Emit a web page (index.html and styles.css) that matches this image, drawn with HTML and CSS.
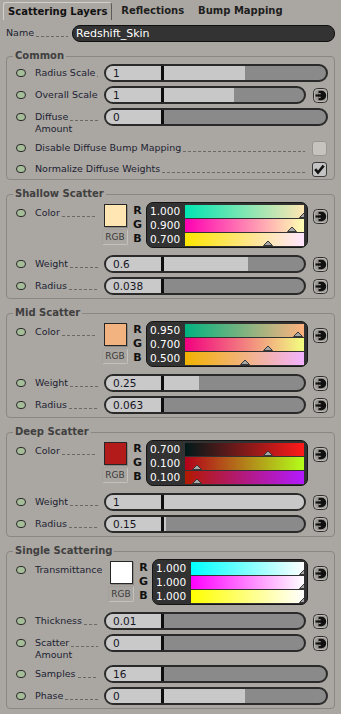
FILE: index.html
```html
<!DOCTYPE html>
<html lang="en">
<head>
    <meta charset="UTF-8">
    <meta name="viewport" content="width=device-width, initial-scale=1.0">
    <title>Redshift Skin - Scattering Layers</title>
    <link rel="stylesheet" href="styles.css">
</head>
<body>
    <div class="tabs">
        <div class="tab active">Scattering Layers</div>
        <div class="tab">Reflections</div>
        <div class="tab">Bump Mapping</div>
    </div>

    <div class="name-row">
        <div class="name-label">Name<i class="lead"></i></div>
        <div class="name-field">Redshift_Skin</div>
    </div>

    <!-- Common -->
    <fieldset class="group">
        <legend>Common</legend>
        <div class="row">
            <span class="led"></span>
            <div class="label"><span class="first">Radius Scale<i class="lead"></i></span></div>
            <div class="slider"><span class="val">1</span><span class="track"><span class="fill" style="width:50%"></span></span></div>
        </div>
        <div class="row">
            <span class="led"></span>
            <div class="label"><span class="first">Overall Scale<i class="lead"></i></span></div>
            <div class="slider"><span class="val">1</span><span class="track"><span class="fill" style="width:50%"></span></span></div>
            <svg class="plug" viewBox="0 0 15 15"><rect x="0.5" y="0.5" width="14" height="14" rx="4" fill="#9c9893" stroke="#2e2e2e"/><rect x="1.5" y="1.5" width="12" height="12" rx="3" fill="none" stroke="#bdb9b4"/><path d="M2.5 7.5h4" stroke="#111" stroke-width="2.2"/><path d="M5.5 2.8h3a4.7 4.7 0 0 1 0 9.4h-3z" fill="#111"/><path d="M5.5 5.6h2.2M5.5 9.4h2.2" stroke="#9c9893" stroke-width="1.1"/></svg>
        </div>
        <div class="row">
            <span class="led"></span>
            <div class="label"><span class="first">Diffuse<i class="lead"></i></span><span>Amount</span></div>
            <div class="slider"><span class="val">0</span><span class="track"><span class="fill" style="width:0%"></span></span></div>
        </div>
        <div class="row">
            <span class="led"></span>
            <div class="label wide"><span class="first">Disable Diffuse Bump Mapping<i class="lead"></i></span></div>
            <span class="check"></span>
        </div>
        <div class="row">
            <span class="led"></span>
            <div class="label wide"><span class="first">Normalize Diffuse Weights<i class="lead"></i></span></div>
            <span class="check on"><svg viewBox="0 0 15 15"><path d="M2.5 7l3.3 4 6.5-8" fill="none" stroke="#111" stroke-width="3"/></svg></span>
        </div>
    </fieldset>

    <!-- Shallow Scatter -->
    <fieldset class="group">
        <legend>Shallow Scatter</legend>
        <div class="row color-row" style="--r:1;--g:0.9;--b:0.7">
            <span class="led"></span>
            <div class="label"><span class="first">Color<i class="lead"></i></span></div>
            <div class="swatch-col"><span class="swatch"></span><span class="rgb-btn">RGB</span></div>
            <div class="letters"><b>R</b><b>G</b><b>B</b></div>
            <div class="picker">
                <div class="chan"><span class="num">1.000</span><span class="bar bar-r"><svg class="mark" viewBox="0 0 10 6"><path d="M0.5 5.5L5 1l4.5 4.5z" fill="#a6a6a6" stroke="#383838"/></svg></span></div>
                <div class="chan"><span class="num">0.900</span><span class="bar bar-g"><svg class="mark" viewBox="0 0 10 6"><path d="M0.5 5.5L5 1l4.5 4.5z" fill="#a6a6a6" stroke="#383838"/></svg></span></div>
                <div class="chan"><span class="num">0.700</span><span class="bar bar-b"><svg class="mark" viewBox="0 0 10 6"><path d="M0.5 5.5L5 1l4.5 4.5z" fill="#a6a6a6" stroke="#383838"/></svg></span></div>
            </div>
            <svg class="plug" viewBox="0 0 15 15"><rect x="0.5" y="0.5" width="14" height="14" rx="4" fill="#9c9893" stroke="#2e2e2e"/><rect x="1.5" y="1.5" width="12" height="12" rx="3" fill="none" stroke="#bdb9b4"/><path d="M2.5 7.5h4" stroke="#111" stroke-width="2.2"/><path d="M5.5 2.8h3a4.7 4.7 0 0 1 0 9.4h-3z" fill="#111"/><path d="M5.5 5.6h2.2M5.5 9.4h2.2" stroke="#9c9893" stroke-width="1.1"/></svg>
        </div>
        <div class="row after-color">
            <span class="led"></span>
            <div class="label"><span class="first">Weight<i class="lead"></i></span></div>
            <div class="slider"><span class="val">0.6</span><span class="track"><span class="fill" style="width:60%"></span></span></div>
            <svg class="plug" viewBox="0 0 15 15"><rect x="0.5" y="0.5" width="14" height="14" rx="4" fill="#9c9893" stroke="#2e2e2e"/><rect x="1.5" y="1.5" width="12" height="12" rx="3" fill="none" stroke="#bdb9b4"/><path d="M2.5 7.5h4" stroke="#111" stroke-width="2.2"/><path d="M5.5 2.8h3a4.7 4.7 0 0 1 0 9.4h-3z" fill="#111"/><path d="M5.5 5.6h2.2M5.5 9.4h2.2" stroke="#9c9893" stroke-width="1.1"/></svg>
        </div>
        <div class="row">
            <span class="led"></span>
            <div class="label"><span class="first">Radius<i class="lead"></i></span></div>
            <div class="slider"><span class="val">0.038</span><span class="track"><span class="fill" style="width:0%"></span></span></div>
            <svg class="plug" viewBox="0 0 15 15"><rect x="0.5" y="0.5" width="14" height="14" rx="4" fill="#9c9893" stroke="#2e2e2e"/><rect x="1.5" y="1.5" width="12" height="12" rx="3" fill="none" stroke="#bdb9b4"/><path d="M2.5 7.5h4" stroke="#111" stroke-width="2.2"/><path d="M5.5 2.8h3a4.7 4.7 0 0 1 0 9.4h-3z" fill="#111"/><path d="M5.5 5.6h2.2M5.5 9.4h2.2" stroke="#9c9893" stroke-width="1.1"/></svg>
        </div>
    </fieldset>

    <!-- Mid Scatter -->
    <fieldset class="group">
        <legend>Mid Scatter</legend>
        <div class="row color-row" style="--r:0.95;--g:0.7;--b:0.5">
            <span class="led"></span>
            <div class="label"><span class="first">Color<i class="lead"></i></span></div>
            <div class="swatch-col"><span class="swatch"></span><span class="rgb-btn">RGB</span></div>
            <div class="letters"><b>R</b><b>G</b><b>B</b></div>
            <div class="picker">
                <div class="chan"><span class="num">0.950</span><span class="bar bar-r"><svg class="mark" viewBox="0 0 10 6"><path d="M0.5 5.5L5 1l4.5 4.5z" fill="#a6a6a6" stroke="#383838"/></svg></span></div>
                <div class="chan"><span class="num">0.700</span><span class="bar bar-g"><svg class="mark" viewBox="0 0 10 6"><path d="M0.5 5.5L5 1l4.5 4.5z" fill="#a6a6a6" stroke="#383838"/></svg></span></div>
                <div class="chan"><span class="num">0.500</span><span class="bar bar-b"><svg class="mark" viewBox="0 0 10 6"><path d="M0.5 5.5L5 1l4.5 4.5z" fill="#a6a6a6" stroke="#383838"/></svg></span></div>
            </div>
            <svg class="plug" viewBox="0 0 15 15"><rect x="0.5" y="0.5" width="14" height="14" rx="4" fill="#9c9893" stroke="#2e2e2e"/><rect x="1.5" y="1.5" width="12" height="12" rx="3" fill="none" stroke="#bdb9b4"/><path d="M2.5 7.5h4" stroke="#111" stroke-width="2.2"/><path d="M5.5 2.8h3a4.7 4.7 0 0 1 0 9.4h-3z" fill="#111"/><path d="M5.5 5.6h2.2M5.5 9.4h2.2" stroke="#9c9893" stroke-width="1.1"/></svg>
        </div>
        <div class="row after-color">
            <span class="led"></span>
            <div class="label"><span class="first">Weight<i class="lead"></i></span></div>
            <div class="slider"><span class="val">0.25</span><span class="track"><span class="fill" style="width:25%"></span></span></div>
            <svg class="plug" viewBox="0 0 15 15"><rect x="0.5" y="0.5" width="14" height="14" rx="4" fill="#9c9893" stroke="#2e2e2e"/><rect x="1.5" y="1.5" width="12" height="12" rx="3" fill="none" stroke="#bdb9b4"/><path d="M2.5 7.5h4" stroke="#111" stroke-width="2.2"/><path d="M5.5 2.8h3a4.7 4.7 0 0 1 0 9.4h-3z" fill="#111"/><path d="M5.5 5.6h2.2M5.5 9.4h2.2" stroke="#9c9893" stroke-width="1.1"/></svg>
        </div>
        <div class="row">
            <span class="led"></span>
            <div class="label"><span class="first">Radius<i class="lead"></i></span></div>
            <div class="slider"><span class="val">0.063</span><span class="track"><span class="fill" style="width:0%"></span></span></div>
            <svg class="plug" viewBox="0 0 15 15"><rect x="0.5" y="0.5" width="14" height="14" rx="4" fill="#9c9893" stroke="#2e2e2e"/><rect x="1.5" y="1.5" width="12" height="12" rx="3" fill="none" stroke="#bdb9b4"/><path d="M2.5 7.5h4" stroke="#111" stroke-width="2.2"/><path d="M5.5 2.8h3a4.7 4.7 0 0 1 0 9.4h-3z" fill="#111"/><path d="M5.5 5.6h2.2M5.5 9.4h2.2" stroke="#9c9893" stroke-width="1.1"/></svg>
        </div>
    </fieldset>

    <!-- Deep Scatter -->
    <fieldset class="group">
        <legend>Deep Scatter</legend>
        <div class="row color-row" style="--r:0.7;--g:0.1;--b:0.1">
            <span class="led"></span>
            <div class="label"><span class="first">Color<i class="lead"></i></span></div>
            <div class="swatch-col"><span class="swatch"></span><span class="rgb-btn">RGB</span></div>
            <div class="letters"><b>R</b><b>G</b><b>B</b></div>
            <div class="picker">
                <div class="chan"><span class="num">0.700</span><span class="bar bar-r"><svg class="mark" viewBox="0 0 10 6"><path d="M0.5 5.5L5 1l4.5 4.5z" fill="#a6a6a6" stroke="#383838"/></svg></span></div>
                <div class="chan"><span class="num">0.100</span><span class="bar bar-g"><svg class="mark" viewBox="0 0 10 6"><path d="M0.5 5.5L5 1l4.5 4.5z" fill="#a6a6a6" stroke="#383838"/></svg></span></div>
                <div class="chan"><span class="num">0.100</span><span class="bar bar-b"><svg class="mark" viewBox="0 0 10 6"><path d="M0.5 5.5L5 1l4.5 4.5z" fill="#a6a6a6" stroke="#383838"/></svg></span></div>
            </div>
            <svg class="plug" viewBox="0 0 15 15"><rect x="0.5" y="0.5" width="14" height="14" rx="4" fill="#9c9893" stroke="#2e2e2e"/><rect x="1.5" y="1.5" width="12" height="12" rx="3" fill="none" stroke="#bdb9b4"/><path d="M2.5 7.5h4" stroke="#111" stroke-width="2.2"/><path d="M5.5 2.8h3a4.7 4.7 0 0 1 0 9.4h-3z" fill="#111"/><path d="M5.5 5.6h2.2M5.5 9.4h2.2" stroke="#9c9893" stroke-width="1.1"/></svg>
        </div>
        <div class="row after-color">
            <span class="led"></span>
            <div class="label"><span class="first">Weight<i class="lead"></i></span></div>
            <div class="slider"><span class="val">1</span><span class="track"><span class="fill" style="width:100%"></span></span></div>
            <svg class="plug" viewBox="0 0 15 15"><rect x="0.5" y="0.5" width="14" height="14" rx="4" fill="#9c9893" stroke="#2e2e2e"/><rect x="1.5" y="1.5" width="12" height="12" rx="3" fill="none" stroke="#bdb9b4"/><path d="M2.5 7.5h4" stroke="#111" stroke-width="2.2"/><path d="M5.5 2.8h3a4.7 4.7 0 0 1 0 9.4h-3z" fill="#111"/><path d="M5.5 5.6h2.2M5.5 9.4h2.2" stroke="#9c9893" stroke-width="1.1"/></svg>
        </div>
        <div class="row">
            <span class="led"></span>
            <div class="label"><span class="first">Radius<i class="lead"></i></span></div>
            <div class="slider"><span class="val">0.15</span><span class="track"><span class="fill" style="width:1.5%"></span></span></div>
            <svg class="plug" viewBox="0 0 15 15"><rect x="0.5" y="0.5" width="14" height="14" rx="4" fill="#9c9893" stroke="#2e2e2e"/><rect x="1.5" y="1.5" width="12" height="12" rx="3" fill="none" stroke="#bdb9b4"/><path d="M2.5 7.5h4" stroke="#111" stroke-width="2.2"/><path d="M5.5 2.8h3a4.7 4.7 0 0 1 0 9.4h-3z" fill="#111"/><path d="M5.5 5.6h2.2M5.5 9.4h2.2" stroke="#9c9893" stroke-width="1.1"/></svg>
        </div>
    </fieldset>

    <!-- Single Scattering -->
    <fieldset class="group">
        <legend>Single Scattering</legend>
        <div class="row color-row" style="--r:1;--g:1;--b:1">
            <span class="led"></span>
            <div class="label trans"><span class="first">Transmittance<i class="lead"></i></span></div>
            <div class="swatch-col"><span class="swatch"></span><span class="rgb-btn">RGB</span></div>
            <div class="letters"><b>R</b><b>G</b><b>B</b></div>
            <div class="picker">
                <div class="chan"><span class="num">1.000</span><span class="bar bar-r"><svg class="mark" viewBox="0 0 10 6"><path d="M0.5 5.5L5 1l4.5 4.5z" fill="#a6a6a6" stroke="#383838"/></svg></span></div>
                <div class="chan"><span class="num">1.000</span><span class="bar bar-g"><svg class="mark" viewBox="0 0 10 6"><path d="M0.5 5.5L5 1l4.5 4.5z" fill="#a6a6a6" stroke="#383838"/></svg></span></div>
                <div class="chan"><span class="num">1.000</span><span class="bar bar-b"><svg class="mark" viewBox="0 0 10 6"><path d="M0.5 5.5L5 1l4.5 4.5z" fill="#a6a6a6" stroke="#383838"/></svg></span></div>
            </div>
            <svg class="plug" viewBox="0 0 15 15"><rect x="0.5" y="0.5" width="14" height="14" rx="4" fill="#9c9893" stroke="#2e2e2e"/><rect x="1.5" y="1.5" width="12" height="12" rx="3" fill="none" stroke="#bdb9b4"/><path d="M2.5 7.5h4" stroke="#111" stroke-width="2.2"/><path d="M5.5 2.8h3a4.7 4.7 0 0 1 0 9.4h-3z" fill="#111"/><path d="M5.5 5.6h2.2M5.5 9.4h2.2" stroke="#9c9893" stroke-width="1.1"/></svg>
        </div>
        <div class="row after-color">
            <span class="led"></span>
            <div class="label"><span class="first">Thickness<i class="lead"></i></span></div>
            <div class="slider"><span class="val">0.01</span><span class="track"><span class="fill" style="width:0%"></span></span></div>
            <svg class="plug" viewBox="0 0 15 15"><rect x="0.5" y="0.5" width="14" height="14" rx="4" fill="#9c9893" stroke="#2e2e2e"/><rect x="1.5" y="1.5" width="12" height="12" rx="3" fill="none" stroke="#bdb9b4"/><path d="M2.5 7.5h4" stroke="#111" stroke-width="2.2"/><path d="M5.5 2.8h3a4.7 4.7 0 0 1 0 9.4h-3z" fill="#111"/><path d="M5.5 5.6h2.2M5.5 9.4h2.2" stroke="#9c9893" stroke-width="1.1"/></svg>
        </div>
        <div class="row">
            <span class="led"></span>
            <div class="label"><span class="first">Scatter<i class="lead"></i></span><span>Amount</span></div>
            <div class="slider"><span class="val">0</span><span class="track"><span class="fill" style="width:0%"></span></span></div>
            <svg class="plug" viewBox="0 0 15 15"><rect x="0.5" y="0.5" width="14" height="14" rx="4" fill="#9c9893" stroke="#2e2e2e"/><rect x="1.5" y="1.5" width="12" height="12" rx="3" fill="none" stroke="#bdb9b4"/><path d="M2.5 7.5h4" stroke="#111" stroke-width="2.2"/><path d="M5.5 2.8h3a4.7 4.7 0 0 1 0 9.4h-3z" fill="#111"/><path d="M5.5 5.6h2.2M5.5 9.4h2.2" stroke="#9c9893" stroke-width="1.1"/></svg>
        </div>
        <div class="row">
            <span class="led"></span>
            <div class="label"><span class="first">Samples<i class="lead"></i></span></div>
            <div class="slider"><span class="val">16</span><span class="track"><span class="fill" style="width:0%"></span></span></div>
        </div>
        <div class="row">
            <span class="led"></span>
            <div class="label"><span class="first">Phase<i class="lead"></i></span></div>
            <div class="slider"><span class="val">0</span><span class="track"><span class="fill" style="width:50%"></span></span></div>
        </div>
    </fieldset>
</body>
</html>
```

FILE: styles.css
```css
* {
    box-sizing: border-box;
}
body {
    margin: 0;
    background-color: #aaa6a1;
    font-family: 'DejaVu Sans', Verdana, sans-serif;
    font-size: 9.5px;
    color: #1c1f33;
    overflow: hidden;
}

/* tabs */
.tabs {
    display: flex;
    align-items: flex-end;
    height: 20px;
}
.tab {
    height: 18px;
    line-height: 17px;
    padding: 0 7px;
    font-size: 10px;
    font-weight: bold;
    color: #1e1e1e;
    white-space: nowrap;
}
.tab.active {
    margin-left: 3px;
    margin-right: 2px;
    padding: 0 4px;
    border: 1px solid #d4d0cb;
    border-right-color: #5e5a56;
    border-bottom: none;
    border-radius: 3px 3px 0 0;
    color: #111;
}

/* name */
.name-row {
    display: flex;
    align-items: center;
    margin: 4px 6px 0;
    height: 18px;
}
.name-label {
    display: flex;
    width: 66px;
    padding-right: 4px;
    line-height: 12px;
}
.name-field {
    flex: 1;
    height: 17px;
    line-height: 15px;
    padding-left: 3px;
    background-color: #333;
    border: 1px solid #101010;
    border-radius: 8px;
    color: #fff;
    font-size: 11px;
}

.lead {
    flex: 1;
    min-width: 0;
    height: 1px;
    align-self: flex-end;
    margin: 0 0 2px 2px;
    background: repeating-linear-gradient(90deg, #6c6863 0 3px, transparent 3px 5px);
}

/* groups */
.group {
    margin: 8px 6px 0;
    padding: 2px 6px 2px 6px;
    border: 1px solid #8a8681;
    border-radius: 4px;
    min-width: 0;
}
.group + .group {
    padding-bottom: 3px;
}
.group legend {
    padding: 0 2px;
    font-size: 10px;
    font-weight: bold;
    line-height: 12px;
    color: #404040;
}

.row {
    display: flex;
    align-items: flex-start;
    margin-top: 4px;
}
.row:first-of-type {
    margin-top: 0;
}
.row.after-color {
    margin-top: 7px;
}

.led {
    flex: none;
    width: 10px;
    height: 8px;
    margin: 5px 9px 0 3px;
    background-color: #a5bd98;
    border: 1.5px solid #2a2a2a;
    border-radius: 4px;
}

.label {
    flex: none;
    width: 69px;
    display: flex;
    flex-direction: column;
    padding: 3px 6px 0 0;
    line-height: 12px;
    white-space: nowrap;
}
.label .first {
    display: flex;
}
.label.wide {
    flex: 1;
    padding-right: 7px;
}

/* slider */
.slider {
    flex: 1;
    display: flex;
    height: 18px;
    border: 2px solid #2a2a2a;
    border-radius: 9px;
    overflow: hidden;
    background-color: #8a8a8a;
}
.slider .val {
    flex: none;
    width: 58px;
    padding-left: 7px;
    background-color: #c9c9c9;
    border-right: 3px solid #0e0e0e;
    font-size: 10.5px;
    line-height: 14px;
    color: #15151f;
}
.slider .track {
    flex: 1;
}
.slider .fill {
    display: block;
    height: 100%;
    background-color: #c8c8c8;
}

.plug {
    flex: none;
    width: 15px;
    height: 15px;
    margin: 2px 0 0 7px;
}

.check {
    flex: none;
    width: 15px;
    height: 15px;
    margin: 2px 1px 0 0;
    background-color: #c6c3bf;
    border: 1px solid #99958f;
    border-radius: 3px;
}
.check.on {
    background-color: #c4c4c4;
    border-color: #3a3a3a;
}
.check svg {
    display: block;
    width: 13px;
    height: 13px;
}

/* colour rows */
.color-row .label {
    width: 67px;
    padding-top: 5px;
    padding-right: 5px;
}
.color-row .label.trans {
    width: 73px;
}
.color-row .led {
    margin-top: 7px;
}
.color-row .plug {
    margin: 7px 0 0 5px;
}

.swatch-col {
    flex: none;
    width: 26px;
    display: flex;
    flex-direction: column;
    align-items: center;
    padding-top: 2px;
}
.swatch {
    width: 23px;
    height: 23px;
    border: 1px solid #262626;
    box-shadow: 1px 1px 0 #8b8782;
    background: rgb(calc(var(--r) * 255) calc(var(--g) * 255) calc(var(--b) * 255));
}
.rgb-btn {
    width: 26px;
    height: 16px;
    margin-top: 2px;
    border: 1px solid #a4a09b;
    border-bottom-color: #c4c0bb;
    border-right-color: #c4c0bb;
    border-radius: 2px;
    font-size: 9px;
    line-height: 14px;
    text-align: center;
    color: #3a3a3a;
}

.letters {
    flex: none;
    width: 9px;
    margin: 2px 0 0 5px;
    display: flex;
    flex-direction: column;
}
.letters b {
    font-size: 11px;
    line-height: 14px;
    text-align: center;
    color: #111;
}

.picker {
    flex: 1;
    margin-left: 4px;
    padding: 2px 3px 0 0;
    background-color: #323232;
    border: 1px solid #151515;
    border-radius: 7px;
}
.chan {
    display: flex;
    height: 14px;
}
.chan .num {
    flex: none;
    width: 38px;
    padding-left: 3px;
    font-size: 10.5px;
    line-height: 13px;
    color: #fff;
}
.bar {
    position: relative;
    flex: 1;
    height: 13px;
    overflow: hidden;
}
.mark {
    position: absolute;
    bottom: 0;
    width: 10px;
    height: 6px;
    margin-left: -5px;
}
.bar-r {
    background: linear-gradient(90deg, rgb(0 calc(var(--g) * 255) calc(var(--b) * 255)), rgb(255 calc(var(--g) * 255) calc(var(--b) * 255)));
}
.bar-r .mark {
    left: calc(var(--r) * 100%);
}
.bar-g {
    background: linear-gradient(90deg, rgb(calc(var(--r) * 255) 0 calc(var(--b) * 255)), rgb(calc(var(--r) * 255) 255 calc(var(--b) * 255)));
}
.bar-g .mark {
    left: calc(var(--g) * 100%);
}
.bar-b {
    background: linear-gradient(90deg, rgb(calc(var(--r) * 255) calc(var(--g) * 255) 0), rgb(calc(var(--r) * 255) calc(var(--g) * 255) 255));
}
.bar-b .mark {
    left: calc(var(--b) * 100%);
}
```
